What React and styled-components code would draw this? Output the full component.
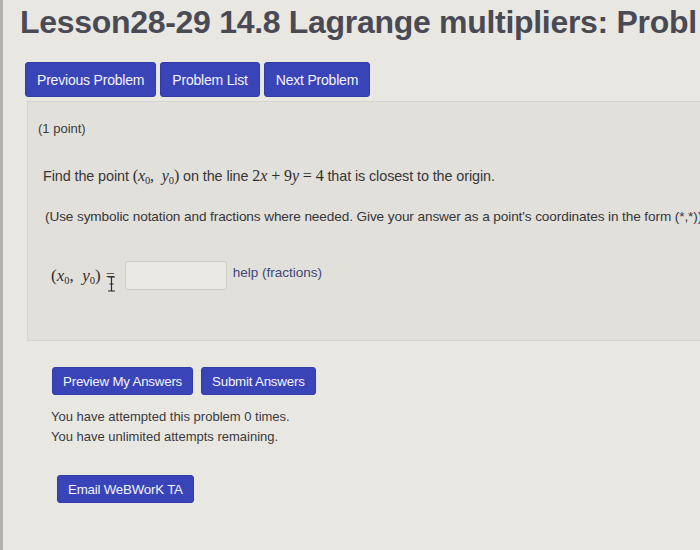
import React from 'react'
import styled, {createGlobalStyle} from 'styled-components'


const GlobalStl = createGlobalStyle`
  html, body {
    margin: 0;
    padding: 0;
    background: #e9e7e2;
    overflow: hidden;
  }
  body {
    font-family: "Liberation Sans", Arial, sans-serif;
    color: #3b3b3e;
  }
`

const PageStl = styled.div`
  width: 700px;
  height: 550px;
  box-sizing: border-box;
  border-left: 3px solid #b4b2ac;
  overflow: hidden;
  background: #e9e7e2;
`

const TitleStl = styled.h1`
  margin: 0;
  padding: 3px 0 0 17px;
  font-size: 32px;
  line-height: 38px;
  font-weight: bold;
  letter-spacing: -0.3px;
  color: #4a4a55;
  white-space: nowrap;
  overflow: hidden;
`

const NavRowStl = styled.div`
  display: flex;
  gap: 4px;
  padding: 21px 0 0 22px;
`

const ButtonStl = styled.button`
  font-family: "Liberation Sans", Arial, sans-serif;
  font-size: ${({small}) => small ? '13.3px' : '14px'};
  color: #f4f4fa;
  background: #3a44b9;
  border: 1px solid #323ca8;
  border-radius: 3px;
  padding: ${({small}) => small ? '0 10px' : '0 11px'};
  height: ${({small}) => small ? '28px' : '35px'};
  letter-spacing: -0.2px;
  white-space: nowrap;
  cursor: pointer;
`

const PanelStl = styled.div`
  margin: 4px 0 0 24px;
  width: 700px;
  height: 240px;
  box-sizing: border-box;
  background: #e2e0da;
  border: 1px solid #d6d4ce;
  border-right: none;
  padding: 19px 0 0 10px;
  white-space: nowrap;
  overflow: hidden;
`

const PointsStl = styled.div`
  font-size: 13px;
  color: #3d3d40;
`

const ParaStl = styled.p`
  margin: ${({top}) => top}px 0 0 ${({indent}) => indent || 5}px;
  font-size: ${({size}) => size || 14.4}px;
  line-height: 20px;
  color: #363639;
  letter-spacing: -0.1px;
`

const MathStl = styled.span`
  font-family: "Liberation Serif", "Times New Roman", serif;
  font-size: ${({big}) => big ? '17px' : '16px'};
  color: #2e2e30;
`

const VarStl = styled.i`
  font-style: italic;
`

const SubStl = styled.sub`
  font-size: 10.5px;
  vertical-align: -3px;
  font-style: normal;
`

const AnswerRowStl = styled.div`
  display: flex;
  align-items: center;
  margin: 34px 0 0 13px;
`

const EqualsStl = styled.span`
  position: relative;
  font-family: "Liberation Serif", "Times New Roman", serif;
  font-size: 16px;
  margin: 0 10px 0 5px;
  color: #3a3a3c;
`

const CursorStl = styled.svg`
  position: absolute;
  left: 1px;
  top: 9px;
`

const InputStl = styled.input`
  width: 102px;
  height: 29px;
  box-sizing: border-box;
  border: 1px solid #cfcdc7;
  border-radius: 3px;
  background: #ebe9e4;
  margin-right: 6px;
`

const HelpStl = styled.a`
  font-size: 13.5px;
  color: #3f4778;
  text-decoration: none;
  margin-top: -6px;
`

const ActionsStl = styled.div`
  display: flex;
  gap: 8px;
  padding: 26px 0 0 49px;
`

const AttemptsStl = styled.div`
  padding: 12px 0 0 48px;
  font-size: 13px;
  line-height: 20px;
  color: #3a3a3d;
`

const EmailRowStl = styled.div`
  padding: 28px 0 0 54px;
`


const Var = ({name}) => (
  <><VarStl>{name}</VarStl><SubStl>0</SubStl></>
)

const Point = ({big}) => (
  <MathStl big={big}>(<Var name="x" />,&nbsp; <Var name="y" />)</MathStl>
)


export default function App() {
  return (
    <>
      <GlobalStl />
      <PageStl>
        <TitleStl>Lesson28-29 14.8 Lagrange multipliers: Probl</TitleStl>

        <NavRowStl>
          <ButtonStl>Previous Problem</ButtonStl>
          <ButtonStl>Problem List</ButtonStl>
          <ButtonStl>Next Problem</ButtonStl>
        </NavRowStl>

        <PanelStl>
          <PointsStl>(1 point)</PointsStl>

          <ParaStl top={30}>
            Find the point <Point /> on the line{' '}
            <MathStl>2<VarStl>x</VarStl> + 9<VarStl>y</VarStl> = 4</MathStl>{' '}
            that is closest to the origin.
          </ParaStl>

          <ParaStl top={16} indent={7} size={13.6}>
            (Use symbolic notation and fractions where needed. Give your answer as a point's coordinates in the form (*,*))
          </ParaStl>

          <AnswerRowStl>
            <Point big />
            <EqualsStl>
              =
              <CursorStl width="9" height="16" viewBox="0 0 9 16">
                <path d="M1 1 H3.5 Q4.5 1 4.5 2.5 V13.5 Q4.5 15 3.5 15 H1 M8 1 H5.5 Q4.5 1 4.5 2.5 M4.5 13.5 Q4.5 15 5.5 15 H8 M2.5 8 H6.5"
                      fill="none" stroke="#2c2c2e" strokeWidth="1.2" />
              </CursorStl>
            </EqualsStl>
            <InputStl />
            <HelpStl>help (fractions)</HelpStl>
          </AnswerRowStl>
        </PanelStl>

        <ActionsStl>
          <ButtonStl small>Preview My Answers</ButtonStl>
          <ButtonStl small>Submit Answers</ButtonStl>
        </ActionsStl>

        <AttemptsStl>
          <div>You have attempted this problem 0 times.</div>
          <div>You have unlimited attempts remaining.</div>
        </AttemptsStl>

        <EmailRowStl>
          <ButtonStl small>Email WeBWorK TA</ButtonStl>
        </EmailRowStl>
      </PageStl>
    </>
  )
}
